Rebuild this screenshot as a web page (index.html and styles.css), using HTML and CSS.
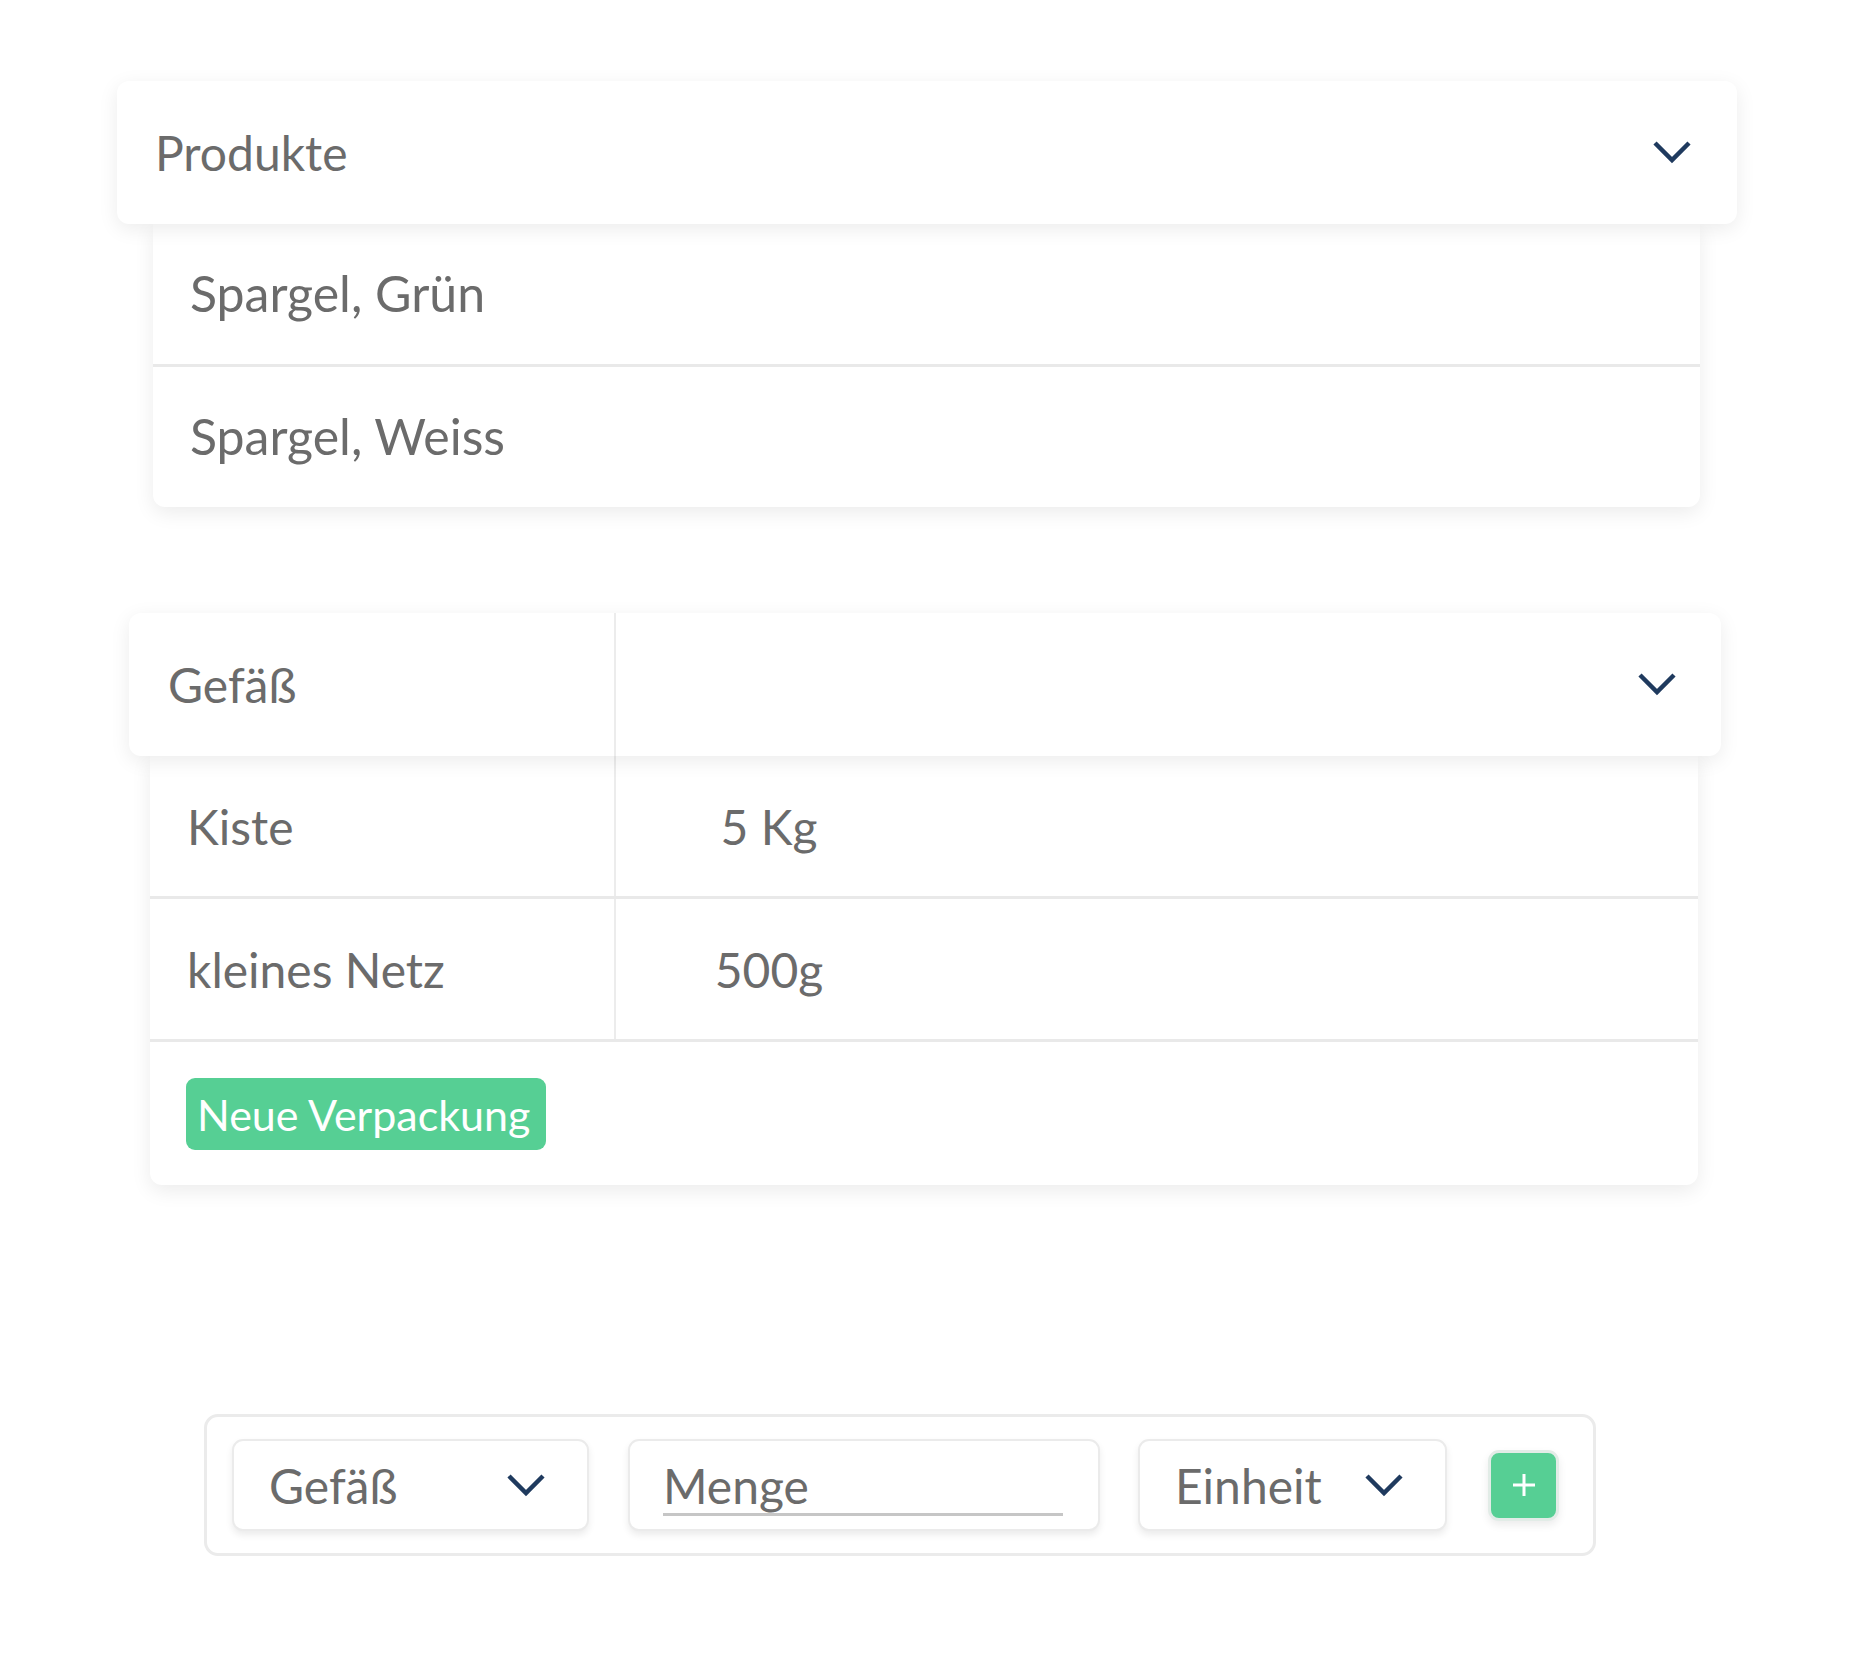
FILE: index.html
```html
<!DOCTYPE html>
<html lang="de">
<head>
    <meta charset="UTF-8">
    <meta name="viewport" content="width=device-width, initial-scale=1.0">
    <title>Produkte</title>
    <link rel="stylesheet" href="styles.css">
</head>
<body>
    <div class="page">
        <div class="dropdown products">
            <div class="dropdown-head">
                <span>Produkte</span>
                <svg class="chevron" viewBox="0 0 38 23"><polyline points="2,2 19,19 36,2"/></svg>
            </div>
            <div class="dropdown-list">
                <div class="list-row">Spargel, Grün</div>
                <div class="list-row">Spargel, Weiss</div>
            </div>
        </div>

        <div class="dropdown packaging">
            <div class="dropdown-head split">
                <div class="cell name">Gefäß</div>
                <div class="cell value">
                    <svg class="chevron" viewBox="0 0 38 23"><polyline points="2,2 19,19 36,2"/></svg>
                </div>
            </div>
            <div class="dropdown-list">
                <div class="list-row split">
                    <div class="cell name">Kiste</div>
                    <div class="cell value"><span class="amount">5 Kg</span></div>
                </div>
                <div class="list-row split">
                    <div class="cell name">kleines Netz</div>
                    <div class="cell value"><span class="amount">500g</span></div>
                </div>
                <div class="list-row action-row">
                    <button class="btn-new">Neue Verpackung</button>
                </div>
            </div>
        </div>

        <div class="add-form">
            <div class="select container-select">
                <span>Gefäß</span>
                <svg class="chevron" viewBox="0 0 38 23"><polyline points="2,2 19,19 36,2"/></svg>
            </div>
            <div class="qty-input">
                <div class="qty-field">Menge</div>
            </div>
            <div class="select unit-select">
                <span>Einheit</span>
                <svg class="chevron" viewBox="0 0 38 23"><polyline points="2,2 19,19 36,2"/></svg>
            </div>
            <button class="btn-add">
                <svg viewBox="0 0 24 24"><path d="M12 1v22M1 12h22"/></svg>
            </button>
        </div>
    </div>
</body>
</html>
```

FILE: styles.css
```css
body {
    font-family: Lato, "Open Sans", sans-serif;
    color: #6b6b6b;
    background-color: #fff;
    margin: 0;
    padding: 0;
}

.page {
    padding-top: 81px;
    padding-bottom: 100px;
}

.dropdown {
    margin: 0 auto;
}

.products {
    width: 1620px;
    margin-left: 117px;
}

.packaging {
    width: 1592px;
    margin-top: 106px;
    margin-left: 129px;
}

.dropdown-head {
    position: relative;
    z-index: 2;
    height: 143px;
    display: flex;
    align-items: center;
    justify-content: space-between;
    padding: 0 46px 0 38px;
    background-color: #fff;
    border-radius: 12px;
    box-shadow: 0 5px 20px rgba(0, 0, 0, 0.08);
    font-size: 48px;
}

.dropdown-list {
    position: relative;
    z-index: 1;
    background-color: #fff;
    border-radius: 0 0 12px 12px;
    box-shadow: 0 6px 20px rgba(0, 0, 0, 0.08);
}

.products .dropdown-list {
    margin: 0 37px 0 36px;
}

.products .list-row {
    height: 137px;
    padding-bottom: 3px;
    font-size: 50px;
}

.packaging .dropdown-list {
    margin: 0 23px 0 21px;
}

.list-row {
    height: 140px;
    display: flex;
    align-items: center;
    padding-left: 37px;
    font-size: 48px;
    border-bottom: 3px solid #e9e9e9;
}

.list-row:last-child {
    border-bottom: none;
}

.chevron {
    width: 38px;
    height: 23px;
    flex-shrink: 0;
}

.chevron polyline {
    fill: none;
    stroke: #1f3a5e;
    stroke-width: 4.5;
}

/* two column rows of the packaging table */
.split {
    display: grid;
    padding: 0;
    align-items: stretch;
}

.dropdown-head.split {
    grid-template-columns: 487px 1fr;
}

.list-row.split {
    grid-template-columns: 466px 1fr;
}

.cell {
    display: flex;
    align-items: center;
}

.cell.name {
    padding-left: 37px;
    border-right: 2px solid #ececec;
}

.dropdown-head .cell.name {
    padding-left: 39px;
}

.dropdown-head .cell.value {
    justify-content: flex-end;
    padding-right: 45px;
}

.amount {
    width: 306px;
    text-align: center;
}

.action-row {
    height: auto;
    padding: 36px 0 35px 36px;
}

.btn-new {
    height: 72px;
    padding: 0 16px 0 11px;
    font-family: inherit;
    font-size: 43px;
    color: #fff;
    background-color: #56cf94;
    border: none;
    border-radius: 9px;
    cursor: pointer;
}

/* bottom form */
.add-form {
    width: 1392px;
    box-sizing: border-box;
    margin-top: 229px;
    margin-left: 204px;
    padding: 22px 0 22px 25px;
    display: flex;
    align-items: center;
    border: 3px solid #ebebeb;
    border-radius: 14px;
}

.select,
.qty-input {
    box-sizing: border-box;
    height: 92px;
    background-color: #fff;
    border: 2px solid #ebebeb;
    border-radius: 11px;
    box-shadow: 0 4px 7px rgba(0, 0, 0, 0.08);
    font-size: 48px;
}

.select {
    display: flex;
    align-items: center;
    justify-content: space-between;
    padding: 0 42px 0 35px;
}

.container-select {
    width: 357px;
}

.qty-input {
    width: 472px;
    margin-left: 39px;
    padding: 6px 35px 0 33px;
    display: flex;
    align-items: center;
}

.qty-field {
    flex: 1;
    line-height: 1.1;
    border-bottom: 3px solid #c6c6c6;
}

.unit-select {
    width: 309px;
    margin-left: 38px;
}

.btn-add {
    width: 71px;
    height: 71px;
    margin-left: 41px;
    padding: 0;
    display: flex;
    align-items: center;
    justify-content: center;
    background-color: #56cf94;
    border: 3px solid #e2ece7;
    border-radius: 11px;
    box-shadow: 0 4px 8px rgba(0, 0, 0, 0.08);
    cursor: pointer;
}

.btn-add svg {
    width: 24px;
    height: 24px;
}

.btn-add path {
    stroke: #fff;
    stroke-width: 3;
}
```
